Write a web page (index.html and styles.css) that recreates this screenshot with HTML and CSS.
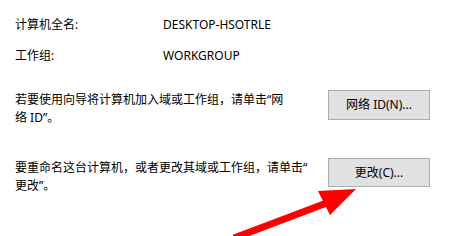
FILE: index.html
```html
<!DOCTYPE html>
<html lang="zh-CN">
<head>
<meta charset="utf-8">
<title>计算机名</title>
<link rel="stylesheet" href="styles.css">
</head>
<body>
<div class="panel">
  <div class="info-row">
    <span class="label">计算机全名:</span>
    <span class="value">DESKTOP-HSOTRLE</span>
  </div>
  <div class="info-row">
    <span class="label">工作组:</span>
    <span class="value">WORKGROUP</span>
  </div>
  <div class="action action-first">
    <p class="desc">若要使用向导将计算机加入域或工作组，请单击“网<br>络 ID”。</p>
    <button class="btn" type="button">网络 ID(N)...</button>
  </div>
  <div class="action action-second">
    <p class="desc">要重命名这台计算机，或者更改其域或工作组，请单击“<br>更改”。</p>
    <button class="btn btn-short" type="button">更改(C)...</button>
  </div>
</div>
<svg class="arrow" width="450" height="236" viewBox="0 0 450 236" xmlns="http://www.w3.org/2000/svg">
  <line x1="234" y1="238" x2="332" y2="201" stroke="#ff0000" stroke-width="7"/>
  <polygon points="356,189 318,191 330,215" fill="#ff0000"/>
</svg>
</body>
</html>
```
FILE: styles.css
```css
html, body {
  margin: 0;
  padding: 0;
  background: #ffffff;
}

body {
  width: 450px;
  height: 236px;
  overflow: hidden;
  position: relative;
  font-family: "Noto Sans", "Noto Sans CJK SC", sans-serif;
  font-size: 12px;
  line-height: 18px;
  color: #000000;
}

.panel {
  display: flex;
  flex-direction: column;
  padding: 16px 20px 0 15px;
}

.info-row {
  display: grid;
  grid-template-columns: 148px 1fr;
  height: 18px;
  margin-bottom: 13px;
}

.action {
  display: flex;
  align-items: flex-start;
}

.action-first {
  margin-top: 12px;
}

.action-second {
  margin-top: 31px;
}

.desc {
  flex: 1;
  margin: 1px 0 0 0;
}

.btn {
  width: 102px;
  height: 30px;
  flex: none;
  margin: 0;
  padding: 0;
  border: 1px solid #adadad;
  background: #e1e1e1;
  color: #000000;
  font-family: "Noto Sans", "Noto Sans CJK SC", sans-serif;
  font-size: 12px;
  line-height: 18px;
}

.btn-short {
  height: 29px;
}

.arrow {
  position: absolute;
  left: 0;
  top: 0;
  pointer-events: none;
}
```
